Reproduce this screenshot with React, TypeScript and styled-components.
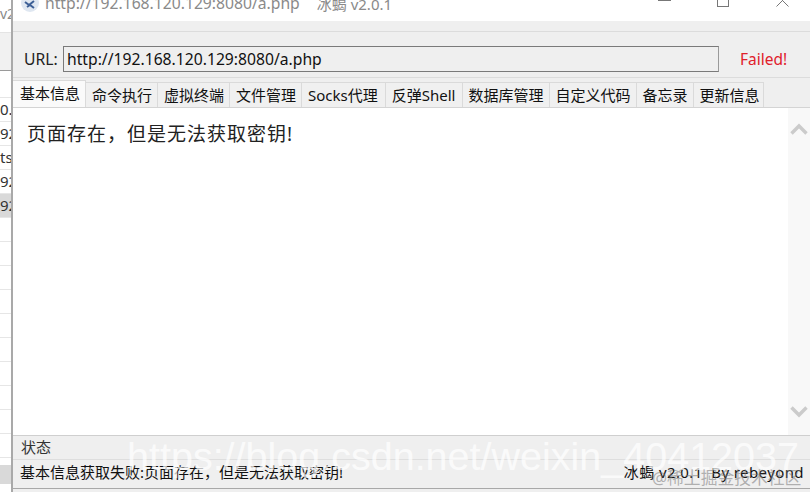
import styled, { createGlobalStyle } from "styled-components";

const GlobalStyle = createGlobalStyle`
    html, body {
        margin: 0;
        padding: 0;
        width: 810px;
        height: 492px;
        overflow: hidden;
        background: #ffffff;
    }
`;

const FONT = `"Noto Sans", "Noto Sans CJK SC", sans-serif`;
const MESSAGE = "页面存在\uFF0C但是无法获取密钥!";

const Page = styled.div`
    position: relative;
    width: 810px;
    height: 492px;
    display: flex;
    overflow: hidden;
    font-family: ${FONT};
    color: #1a1a1a;
`;

const BehindList = styled.div`
    width: 11px;
    flex: none;
    display: flex;
    flex-direction: column;
    overflow: hidden;
    font-size: 15px;
    color: #333;
`;

const BehindTop = styled.div`
    height: 32px;
    line-height: 28px;
    color: #888;
    font-size: 14px;
    box-sizing: border-box;
`;

const BehindHeader = styled.div`
    height: 39px;
    background: #f1f1f1;
    border-top: 1px solid #e4e4e4;
    border-bottom: 1px solid #9a9a9a;
    box-sizing: border-box;
`;

const BehindRow = styled.div<{ $selected?: boolean; $h?: number; $plain?: boolean }>`
    height: ${(p) => p.$h ?? 24}px;
    flex: none;
    line-height: 23px;
    box-sizing: border-box;
    border-bottom: ${(p) => (p.$plain ? "none" : "1px solid #e6e6e6")};
    background: ${(p) => (p.$selected ? "#d9d9d9" : "#ffffff")};
    white-space: nowrap;
`;

const Window = styled.div`
    flex: 1;
    min-width: 0;
    height: 492px;
    display: flex;
    flex-direction: column;
    border-left: 2px solid #a9a9a9;
    box-sizing: border-box;
    background: #efefef;
    overflow: hidden;
`;

const TitleBar = styled.div`
    height: 21px;
    flex: none;
    background: #ffffff;
    display: flex;
    align-items: flex-start;
    overflow: hidden;
    padding-left: 8px;
    padding-right: 21px;
`;

const TitleInner = styled.div`
    height: 18px;
    flex: 1;
    display: flex;
    align-items: center;
    margin-top: -6px;
    gap: 6px;
    font-size: 15.7px;
    color: #8a8a8a;
`;

const TitleVersion = styled.span`
    margin-left: 11px;
    font-size: 15px;
`;

const Controls = styled.div`
    margin-left: auto;
    align-self: flex-start;
    display: flex;
    gap: 46px;
`;

const ToolbarGap = styled.div`
    height: 10px;
    flex: none;
    border-bottom: 1px solid #dcdcdc;
    box-sizing: content-box;
`;

const UrlRow = styled.div`
    height: 46px;
    flex: none;
    box-sizing: border-box;
    border-bottom: 1px solid #dcdcdc;
    display: flex;
    align-items: center;
    padding: 8px 0 0 11px;
    font-size: 15.7px;
`;

const UrlLabel = styled.span`
    width: 39px;
    flex: none;
    color: #222;
`;

const UrlInput = styled.div`
    width: 656px;
    height: 26px;
    flex: none;
    box-sizing: border-box;
    border: 1px solid #7a7a7a;
    border-right-color: #9a9a9a;
    padding-left: 3px;
    line-height: 24px;
    background: #efefef;
    color: #111;
`;

const Status = styled.span`
    margin-left: 21px;
    color: #e0202a;
    font-size: 15.5px;
`;

const Tabs = styled.div`
    height: 28px;
    flex: none;
    display: flex;
    align-items: flex-end;
    margin-top: 1px;
    margin-left: -1px;
`;

const Tab = styled.div<{ $active?: boolean; $right?: number }>`
    height: ${(p) => (p.$active ? 27 : 25)}px;
    box-sizing: border-box;
    padding: 0 ${(p) => p.$right ?? 5}px 0 ${(p) => (p.$active ? 7 : 6)}px;
    font-size: 15px;
    line-height: ${(p) => (p.$active ? 25 : 24)}px;
    white-space: nowrap;
    color: #111;
    background: ${(p) => (p.$active ? "#fafafa" : "#f0f0f0")};
    border: 1px solid #dadada;
    border-width: 1px 1px 0 0;
    ${(p) => p.$active && "border-left-width: 1px;"}
`;

const Content = styled.div`
    height: 329px;
    flex: none;
    box-sizing: border-box;
    background: #ffffff;
    border-top: 1px solid #d4d4d4;
    border-bottom: 1px solid #cfcfcf;
    display: flex;
`;

const Message = styled.div`
    flex: 1;
    padding: 12px 0 0 14px;
    font-size: 19px;
    line-height: 28px;
    letter-spacing: 1px;
    color: #222;
`;

const ScrollBar = styled.div`
    width: 22px;
    flex: none;
    background: #f8f8f8;
    display: flex;
    flex-direction: column;
    justify-content: space-between;
    align-items: center;
    padding: 15px 0 17px;
`;

const Bottom = styled.div`
    flex: 1;
    display: flex;
    flex-direction: column;
    font-size: 15px;
    color: #222;
`;

const StatusTitle = styled.div`
    height: 23px;
    padding: 0 0 0 8px;
    line-height: 22px;
    box-sizing: border-box;
    color: #333;
`;

const StatusBar = styled.div`
    height: 30px;
    box-sizing: border-box;
    border-top: 1px solid #dedede;
    border-bottom: 1px solid #a8a8a8;
    display: flex;
    justify-content: space-between;
    padding: 0 6px 0 7px;
    line-height: 25px;
    white-space: nowrap;
    color: #111;
`;

const StatusInfo = styled.span`
    letter-spacing: 0.4px;
`;

const Watermark = styled.div`
    position: absolute;
    left: 127px;
    top: 433px;
    font-family: "Liberation Sans", sans-serif;
    font-size: 39.5px;
    line-height: 46px;
    color: rgba(255, 255, 255, 0.72);
    white-space: nowrap;
    pointer-events: none;
`;

const Credit = styled.div`
    position: absolute;
    left: 652px;
    top: 467px;
    font-size: 16.8px;
    line-height: 22px;
    color: rgba(120, 120, 120, 0.55);
    white-space: nowrap;
    pointer-events: none;
`;

function Logo() {
    return (
        <svg width="18" height="18" viewBox="0 0 18 18">
            <circle cx="9" cy="9" r="9" fill="#dfe7f1" />
            <path d="M4 8l4 3 5-4M6 13l3-2 4 3" stroke="#3c5f96" strokeWidth="2" fill="none" />
        </svg>
    );
}

function WindowIcon({ kind }: { kind: "min" | "max" | "close" }) {
    return (
        <svg width="13" height="13" viewBox="0 0 13 13" fill="none" stroke="#777" strokeWidth="1">
            {kind === "min" && <path d="M0 6.5h13" />}
            {kind === "max" && <rect x="0.5" y="0.5" width="11" height="12" />}
            {kind === "close" && <path d="M0.5 0.5l12 12M12.5 0.5l-12 12" />}
        </svg>
    );
}

function Chevron({ up }: { up?: boolean }) {
    return (
        <svg width="18" height="12" viewBox="0 0 18 12" fill="none" stroke="#cbcbcb" strokeWidth="3.4">
            <path d={up ? "M1.5 10.5L9 3l7.5 7.5" : "M1.5 1.5L9 9l7.5-7.5"} />
        </svg>
    );
}

const TABS = [
    { label: "命令执行" },
    { label: "虚拟终端" },
    { label: "文件管理" },
    { label: "Socks代理", right: 7 },
    { label: "反弹Shell", right: 6 },
    { label: "数据库管理" },
    { label: "自定义代码" },
    { label: "备忘录" },
    { label: "更新信息", right: 3 },
];
const ROWS = ["0.", "92", "ts", "92"];

export default function App() {
    return (
        <Page>
            <GlobalStyle />
            <BehindList>
                <BehindTop>v2</BehindTop>
                <BehindHeader />
                <BehindRow $h={27} />
                {ROWS.map((r, i) => (
                    <BehindRow key={i}>{r}</BehindRow>
                ))}
                <BehindRow $selected>92</BehindRow>
                {Array.from({ length: 10 }, (_, i) => (
                    <BehindRow key={i} />
                ))}
                <BehindRow $plain $h={7} />
                <BehindRow $selected $plain $h={19} />
            </BehindList>
            <Window>
                <TitleBar>
                    <TitleInner>
                        <Logo />
                        <span>http://192.168.120.129:8080/a.php</span>
                        <TitleVersion>冰蝎 v2.0.1</TitleVersion>
                        <Controls>
                            <WindowIcon kind="min" />
                            <WindowIcon kind="max" />
                            <WindowIcon kind="close" />
                        </Controls>
                    </TitleInner>
                </TitleBar>
                <ToolbarGap />
                <UrlRow>
                    <UrlLabel>URL:</UrlLabel>
                    <UrlInput>http://192.168.120.129:8080/a.php</UrlInput>
                    <Status>Failed!</Status>
                </UrlRow>
                <Tabs>
                    <Tab $active>基本信息</Tab>
                    {TABS.map((t) => (
                        <Tab key={t.label} $right={t.right}>{t.label}</Tab>
                    ))}
                </Tabs>
                <Content>
                    <Message>{MESSAGE}</Message>
                    <ScrollBar>
                        <Chevron up />
                        <Chevron />
                    </ScrollBar>
                </Content>
                <Bottom>
                    <StatusTitle>状态</StatusTitle>
                    <StatusBar>
                        <span>基本信息获取失败:{MESSAGE}</span>
                        <StatusInfo>冰蝎 v2.0.1 &nbsp;By rebeyond</StatusInfo>
                    </StatusBar>
                </Bottom>
            </Window>
            <Watermark>https://blog.csdn.net/weixin_40412037</Watermark>
            <Credit>@稀土掘金技术社区</Credit>
        </Page>
    );
}
